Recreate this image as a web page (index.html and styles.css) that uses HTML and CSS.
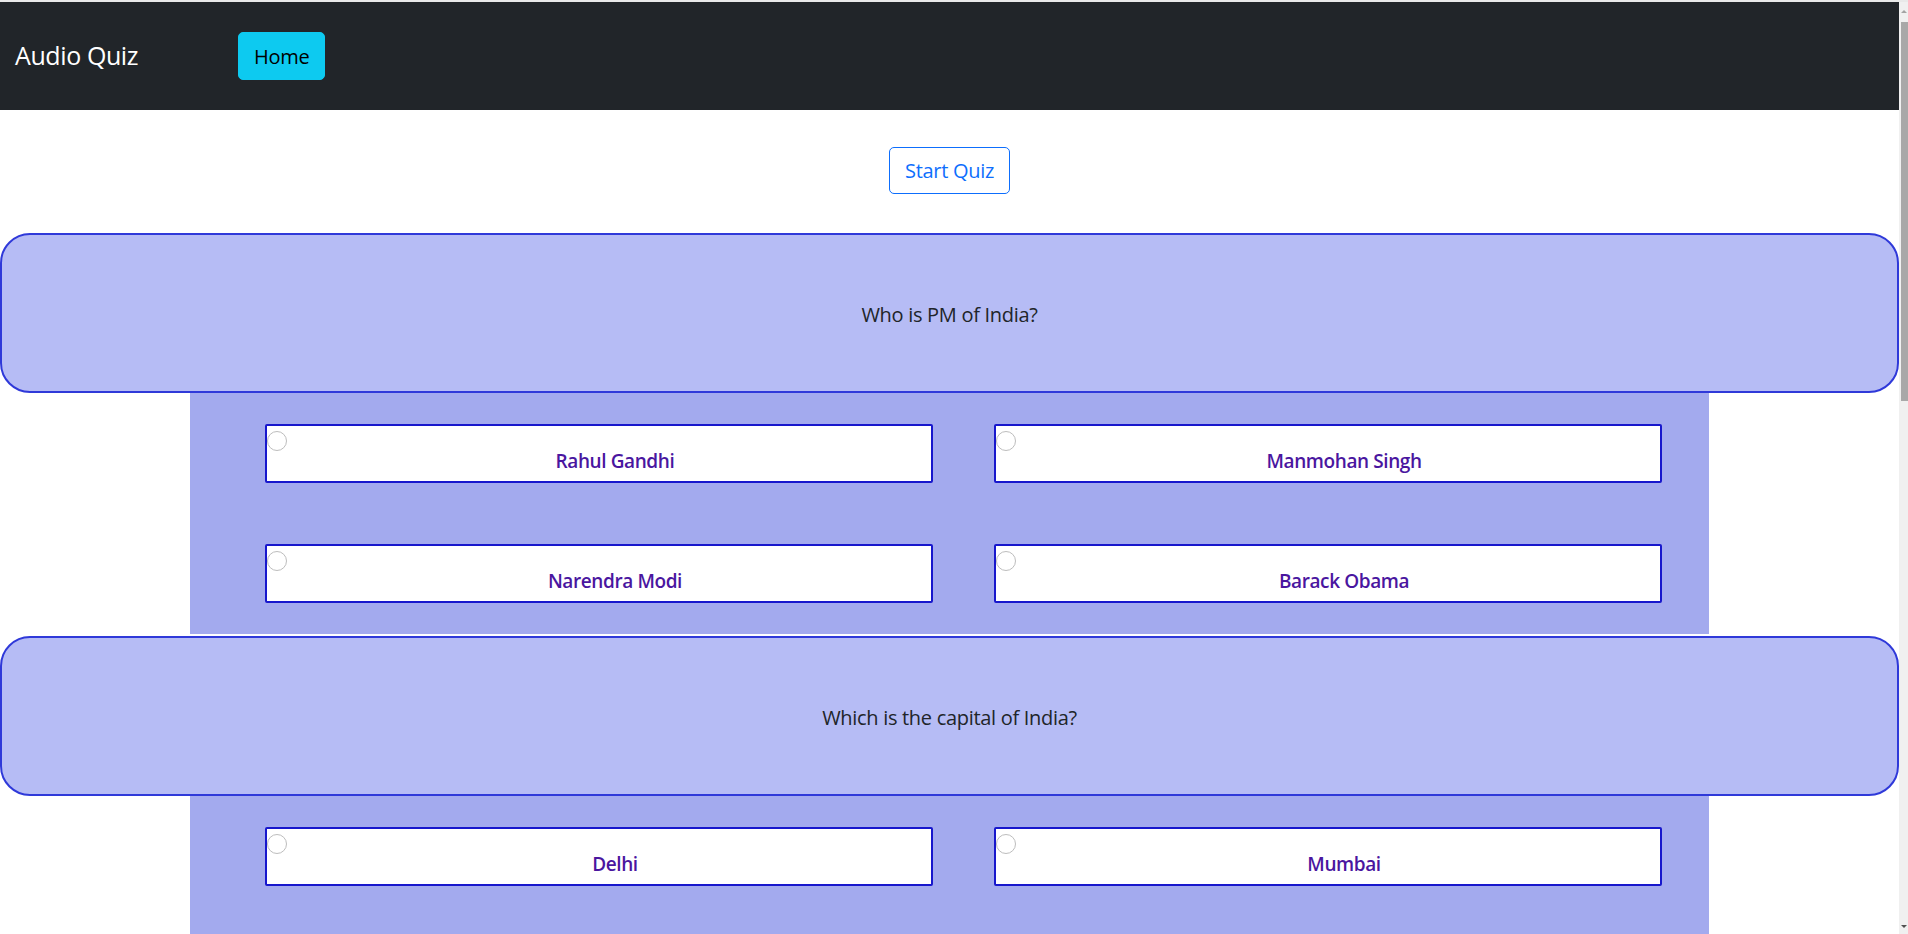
FILE: index.html
```html
<!DOCTYPE html>
<html lang="en">
<head>
<meta charset="utf-8">
<title>Audio Quiz</title>
<link rel="stylesheet" href="styles.css">
</head>
<body>
<div class="window">
  <div class="page">
    <nav class="navbar">
      <a class="brand">Audio Quiz</a>
      <button class="btn-home">Home</button>
    </nav>
    <div class="start-row">
      <button class="btn-start">Start Quiz</button>
    </div>

    <section class="question">
      <div class="q-card">Who is PM of India?</div>
      <div class="options">
        <label class="option"><input type="radio" name="q1"><span class="opt-text">Rahul Gandhi</span></label>
        <label class="option"><input type="radio" name="q1"><span class="opt-text">Manmohan Singh</span></label>
        <label class="option"><input type="radio" name="q1"><span class="opt-text">Narendra Modi</span></label>
        <label class="option"><input type="radio" name="q1"><span class="opt-text">Barack Obama</span></label>
      </div>
    </section>

    <section class="question">
      <div class="q-card">Which is the capital of India?</div>
      <div class="options options-tail">
        <label class="option"><input type="radio" name="q2"><span class="opt-text">Delhi</span></label>
        <label class="option"><input type="radio" name="q2"><span class="opt-text">Mumbai</span></label>
      </div>
    </section>
  </div>
  <div class="scrollbar">
    <div class="sb-arrow sb-up"></div>
    <div class="sb-thumb"></div>
    <div class="sb-space"></div>
    <div class="sb-arrow sb-down"></div>
  </div>
</div>
</body>
</html>
```

FILE: styles.css
```css
html, body {
  margin: 0;
  padding: 0;
  height: 100%;
  overflow: hidden;
}

body {
  font-family: "Open Sans", "Noto Sans", sans-serif;
  font-size: 20px;
  line-height: 1.5;
  letter-spacing: -0.3px;
  color: #212529;
  background: #ffffff;
  border-top: 2px solid #e9e9e9;
  box-sizing: border-box;
}

.window {
  display: flex;
  height: 100%;
}

.page {
  flex: 1;
  min-width: 0;
  overflow: hidden;
}

/* navbar */
.navbar {
  height: 108px;
  background: #212529;
  display: flex;
  align-items: center;
  padding-left: 15px;
}

.brand {
  width: 223px;
  color: #ffffff;
  font-size: 25px;
  line-height: 1.5;
  letter-spacing: -0.4px;
}

.btn-home {
  font-family: inherit;
  font-size: 20px;
  letter-spacing: -0.3px;
  height: 48px;
  padding: 0 15px;
  background: #0dcaf0;
  color: #000000;
  border: 1px solid #0dcaf0;
  border-radius: 5px;
}

/* start button */
.start-row {
  display: flex;
  justify-content: center;
  padding: 37px 0 39px;
}

.btn-start {
  font-family: inherit;
  font-size: 20px;
  letter-spacing: -0.3px;
  height: 47px;
  padding: 0 15px;
  background: #ffffff;
  color: #0d6efd;
  border: 1px solid #0d6efd;
  border-radius: 5px;
}

/* question */
.question + .question {
  margin-top: 2px;
}

.q-card {
  height: 160px;
  box-sizing: border-box;
  padding-top: 3px;
  border: 2px solid #2f39d9;
  border-radius: 30px;
  background: #b6bcf5;
  display: flex;
  align-items: center;
  justify-content: center;
}

.options {
  width: 80%;
  margin: 0 auto;
  background: #a3aaee;
  box-sizing: border-box;
  padding: 31px 47px 31px 75px;
  display: grid;
  grid-template-columns: 1fr 1fr;
  column-gap: 61px;
  row-gap: 61px;
}

.options-tail {
  padding-bottom: 120px;
}

.option {
  height: 59px;
  box-sizing: border-box;
  border: 2px solid #1717cc;
  border-radius: 2px;
  background: #ffffff;
  display: flex;
  flex-direction: column;
  align-items: stretch;
}

.option input {
  appearance: none;
  -webkit-appearance: none;
  width: 20px;
  height: 20px;
  margin: 5px 0 0 0;
  border: 1px solid #bdbdbd;
  border-radius: 50%;
  background: #ffffff;
  box-sizing: border-box;
  flex: none;
}

.opt-text {
  display: block;
  text-align: center;
  padding-left: 32px;
  font-size: 19px;
  font-weight: 600;
  letter-spacing: -0.4px;
  color: #4a169f;
  line-height: 24px;
  margin-top: -2px;
}

/* fake scrollbar */
.scrollbar {
  width: 9px;
  flex: none;
  background: #f0f0f0;
  display: flex;
  flex-direction: column;
}

.sb-arrow {
  height: 20px;
  flex: none;
  position: relative;
}

.sb-up::after,
.sb-down::after {
  content: "";
  position: absolute;
  left: 2px;
  border-left: 3px solid transparent;
  border-right: 3px solid transparent;
}

.sb-up::after {
  top: 8px;
  border-bottom: 3px solid #a3a3a3;
}

.sb-down::after {
  bottom: 6px;
  border-top: 3px solid #505050;
}

.sb-thumb {
  height: 379px;
  margin-left: 2px;
  background: #a8a8a8;
  flex: none;
}

.sb-space {
  flex: 1;
}
```
